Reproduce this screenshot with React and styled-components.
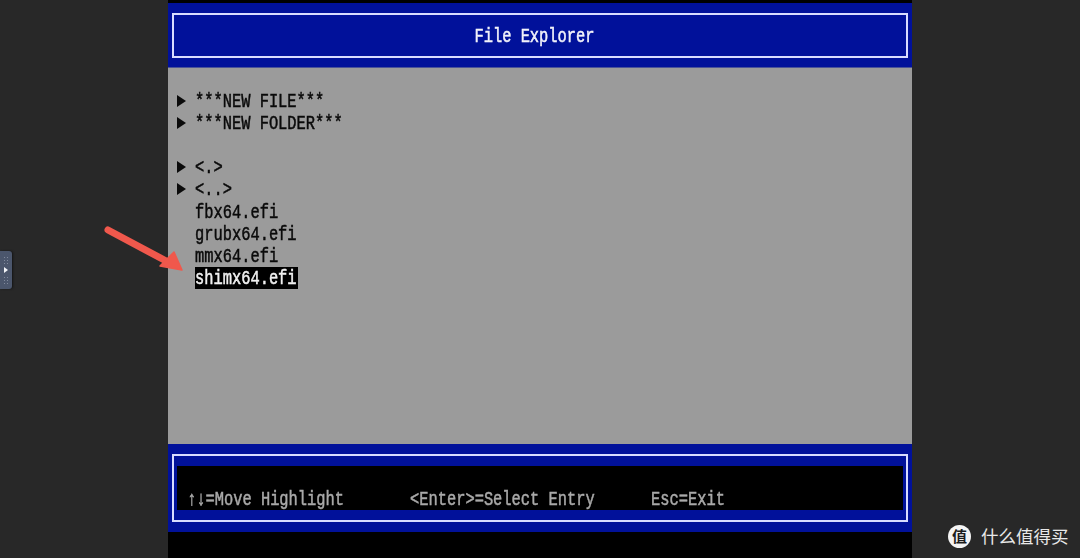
import styled, { createGlobalStyle } from 'styled-components';

const GlobalStyle = createGlobalStyle`
  html, body {
    margin: 0;
    padding: 0;
    background: #282828;
  }
`;

const Page = styled.div`
  position: relative;
  width: 1080px;
  height: 558px;
  overflow: hidden;
  display: flex;
  justify-content: center;
  background: #282828;
`;

const Screen = styled.div`
  width: 744px;
  height: 558px;
  padding-top: 3px;
  box-sizing: border-box;
  display: flex;
  flex-direction: column;
  background: #000;
  font-family: "Liberation Mono", monospace;
`;

const Glyphs = styled.span`
  display: inline-block;
  font-size: 15.4px;
  line-height: 22px;
  white-space: pre;
  transform: scaleY(1.32);
  transform-origin: 0 7.9px;
  -webkit-text-stroke: 0.4px currentColor;
  filter: blur(0.35px);
`;

const Arrows = styled.b`
  font-weight: 700;
`;

const Header = styled.header`
  height: 65px;
  box-sizing: border-box;
  padding: 10px 4px;
  background: #01119a;
  border-bottom: 1px solid #4a5398;
`;

const TitleFrame = styled.div`
  height: 45px;
  box-sizing: border-box;
  padding-right: 11px;
  display: flex;
  align-items: center;
  justify-content: center;
  border: 2px solid #d8dcff;
  color: #f2f2fa;
`;

const Body = styled.main`
  height: 376px;
  box-sizing: border-box;
  padding: 21.8px 8px 0;
  background: #9b9b9b;
  color: #0a0a0a;
`;

const Row = styled.div`
  height: 22.2px;
  display: grid;
  grid-template-columns: 19px auto;
  justify-content: start;
  align-items: center;
`;

const Marker = styled.i`
  width: 0;
  height: 0;
  margin-left: 1px;
  border-left: 9px solid #0a0a0a;
  border-top: 6px solid transparent;
  border-bottom: 6px solid transparent;
`;

const Name = styled.div`
  grid-column: 2;
  height: 22px;
  padding-right: 1px;
  background: ${props => (props.$selected ? '#000' : 'transparent')};
  color: ${props => (props.$selected ? '#f0f0f0' : 'inherit')};
`;

const Gap = styled.div`
  height: 22px;
`;

const Footer = styled.footer`
  height: 88px;
  box-sizing: border-box;
  padding: 10px 4px;
  background: #01119a;
`;

const FooterFrame = styled.div`
  height: 68px;
  box-sizing: border-box;
  padding: 10px 3px 10px;
  border: 2px solid #d8dcff;
`;

const Keys = styled.div`
  height: 44px;
  box-sizing: border-box;
  padding: 22px 0 0 10px;
  display: flex;
  background: #000;
  color: #a9a9a9;
`;

const Key = styled.div`
  width: ${props => props.$width}px;
  height: 22px;
`;

const SideHandle = styled.div`
  position: absolute;
  left: 0;
  top: 251px;
  width: 12px;
  height: 38px;
  border-radius: 0 3px 3px 0;
  background: #4b566c;
  box-shadow: 1px 0 2px #151515;
  display: flex;
  align-items: center;
  justify-content: center;
`;

const HandleArrow = styled.i`
  width: 0;
  height: 0;
  border-left: 4px solid #f2f4f8;
  border-top: 3px solid transparent;
  border-bottom: 3px solid transparent;
`;

const HandleDots = styled.span`
  position: absolute;
  left: 3px;
  top: ${props => props.$top}px;
  width: 6px;
  height: 8px;
  background-image: radial-gradient(circle, #818a9c 0.8px, transparent 1px);
  background-size: 3px 3px;
`;

const Pointer = styled.svg`
  position: absolute;
  left: 100px;
  top: 222px;
  width: 90px;
  height: 56px;
`;

const Watermark = styled.div`
  position: absolute;
  left: 948px;
  top: 524px;
  display: flex;
  align-items: center;
  gap: 10px;
  color: #e8e8e8;
  font-family: "Noto Sans CJK SC", sans-serif;
  font-size: 17.5px;
  line-height: 24px;
`;

const Badge = styled.span`
  width: 23px;
  height: 23px;
  border-radius: 50%;
  background: #f4f4f4;
  color: #1c1c1c;
  display: flex;
  align-items: center;
  justify-content: center;
  font-size: 15px;
  font-weight: 700;
`;

const menuRows = ['***NEW FILE***', '***NEW FOLDER***'];
const dirRows = ['<.>', '<..>'];
const fileRows = ['fbx64.efi', 'grubx64.efi', 'mmx64.efi'];

const App = () => (
  <Page>
    <GlobalStyle />
    <Screen>
      <Header>
        <TitleFrame>
          <Glyphs>File Explorer</Glyphs>
        </TitleFrame>
      </Header>
      <Body>
        {menuRows.map(label => (
          <Row key={label}>
            <Marker />
            <Name><Glyphs>{label}</Glyphs></Name>
          </Row>
        ))}
        <Gap />
        {dirRows.map(label => (
          <Row key={label}>
            <Marker />
            <Name><Glyphs>{label}</Glyphs></Name>
          </Row>
        ))}
        {fileRows.map(label => (
          <Row key={label}>
            <Name><Glyphs>{label}</Glyphs></Name>
          </Row>
        ))}
        <Row>
          <Name $selected><Glyphs>shimx64.efi</Glyphs></Name>
        </Row>
      </Body>
      <Footer>
        <FooterFrame>
          <Keys>
            <Key $width={223}><Glyphs><Arrows>↑↓</Arrows>=Move Highlight</Glyphs></Key>
            <Key $width={241}><Glyphs>{'<Enter>=Select Entry'}</Glyphs></Key>
            <Key $width={80}><Glyphs>Esc=Exit</Glyphs></Key>
          </Keys>
        </FooterFrame>
      </Footer>
    </Screen>

    <SideHandle>
      <HandleDots $top={5} />
      <HandleArrow />
      <HandleDots $top={25} />
    </SideHandle>

    <Pointer viewBox="0 0 90 56">
      <path d="M8 8 L68 40" stroke="#f0584c" strokeWidth="7" strokeLinecap="round" fill="none" />
      <path d="M82 48 L60 44 L74 30 Z" fill="#f0584c" stroke="#f0584c" strokeWidth="1.5" strokeLinejoin="round" />
    </Pointer>

    <Watermark>
      <Badge>值</Badge>
      <span>什么值得买</span>
    </Watermark>
  </Page>
);

export default App;
